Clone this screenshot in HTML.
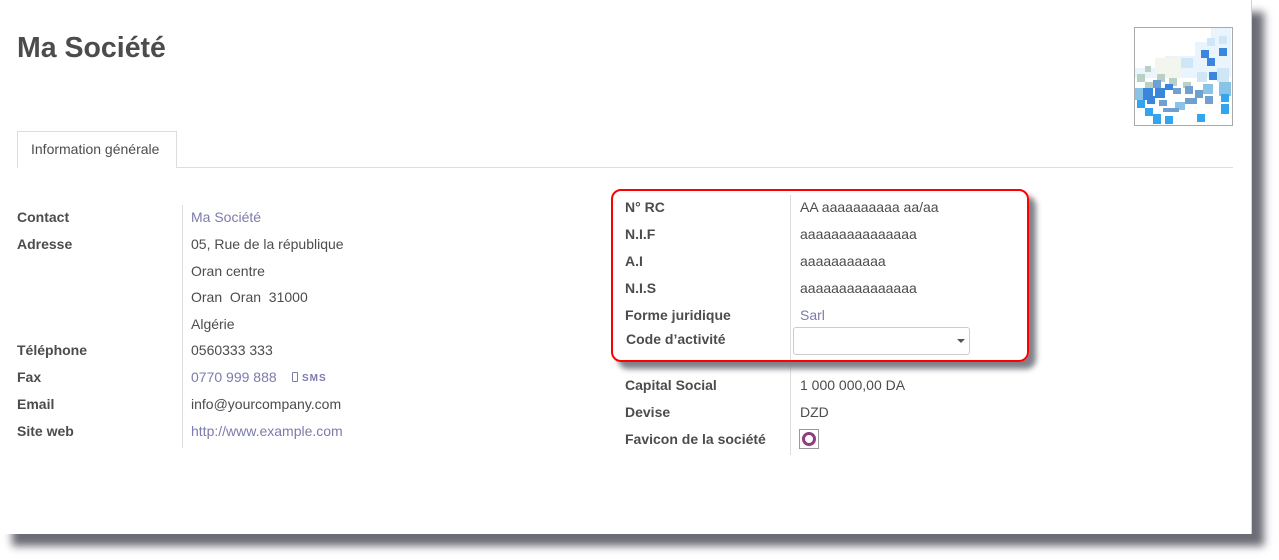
<!DOCTYPE html>
<html><head><meta charset="utf-8"><style>
html,body{margin:0;padding:0;background:#fff;width:1279px;height:560px;overflow:hidden;font-family:"Liberation Sans",Arial,sans-serif;font-size:14px;color:#4c4c4c}
#page{position:absolute;left:0;top:0;width:1251px;height:534px;background:#fff;box-shadow:12px 12px 8px #6c6c76;border-right:1px solid #d0d0d0}
.t{position:absolute;line-height:18px;white-space:nowrap}
.b{font-weight:bold;color:#4c4c4c}
.l{color:#7c7bad}
.v{position:absolute;width:1px;background:#ddd}
</style></head><body>
<div id="page">
<div class="t b" style="left:17px;top:31px;font-size:28.5px;line-height:34px">Ma Société</div>
<div style="position:absolute;left:1134px;top:27px;width:97px;height:97px;border:1px solid #aaa;overflow:hidden;background:#fff">
<svg width="97" height="97" viewBox="0 0 97 97">
<g fill="#eaf4fd"><rect x="76" y="0" width="20" height="14"/><rect x="60" y="14" width="36" height="14"/><rect x="30" y="28" width="66" height="14"/><rect x="0" y="40" width="96" height="10"/></g>
<g fill="#f2f6ee"><rect x="20" y="30" width="26" height="20"/></g>
<g fill="#cfe6f6"><rect x="72" y="10" width="8" height="8"/><rect x="84" y="8" width="8" height="8"/><rect x="46" y="30" width="12" height="10"/><rect x="82" y="40" width="12" height="14"/><rect x="62" y="44" width="10" height="10"/></g>
<g fill="#b9d0c4"><rect x="2" y="46" width="8" height="8"/><rect x="10" y="38" width="6" height="6"/><rect x="22" y="46" width="8" height="8"/><rect x="34" y="50" width="8" height="8"/><rect x="48" y="54" width="8" height="6"/><rect x="10" y="54" width="8" height="8"/></g>
<g fill="#89c3e6"><rect x="0" y="60" width="10" height="12"/><rect x="84" y="54" width="12" height="14"/><rect x="68" y="56" width="10" height="10"/><rect x="40" y="74" width="10" height="8"/></g>
<g fill="#3a86dc"><rect x="66" y="22" width="8" height="8"/><rect x="72" y="30" width="8" height="8"/><rect x="84" y="20" width="8" height="8"/><rect x="74" y="44" width="8" height="8"/><rect x="8" y="60" width="10" height="12"/><rect x="20" y="60" width="10" height="10"/><rect x="30" y="56" width="8" height="6"/><rect x="12" y="68" width="8" height="8"/></g>
<g fill="#6fa0d0"><rect x="18" y="52" width="8" height="8"/><rect x="38" y="60" width="8" height="6"/><rect x="50" y="58" width="8" height="8"/><rect x="60" y="62" width="8" height="8"/><rect x="24" y="72" width="8" height="6"/><rect x="28" y="80" width="16" height="4"/><rect x="50" y="70" width="12" height="6"/><rect x="70" y="68" width="8" height="8"/></g>
<g fill="#33a4f0"><rect x="2" y="72" width="8" height="8"/><rect x="10" y="80" width="8" height="8"/><rect x="18" y="86" width="8" height="10"/><rect x="30" y="88" width="8" height="8"/><rect x="62" y="86" width="8" height="8"/><rect x="86" y="66" width="8" height="8"/><rect x="86" y="76" width="8" height="10"/></g>
</svg></div>
<div style="position:absolute;left:17px;top:131px;width:158px;height:36px;border:1px solid #ddd;border-bottom:none;background:#fff;z-index:2"></div>
<div class="t" style="left:31px;top:140px;z-index:3">Information générale</div>
<div style="position:absolute;left:17px;top:167px;width:1216px;height:1px;background:#ddd"></div>

<div class="v" style="left:182px;top:205px;height:243px"></div>
<div class="t b" style="left:17px;top:208px">Contact</div><div class="t l" style="left:191px;top:208px">Ma Société</div>
<div class="t b" style="left:17px;top:235px">Adresse</div><div class="t" style="left:191px;top:235px">05, Rue de la république</div>
<div class="t" style="left:191px;top:262px">Oran centre</div>
<div class="t" style="left:191px;top:288px">Oran&nbsp; Oran&nbsp; 31000</div>
<div class="t" style="left:191px;top:315px">Algérie</div>
<div class="t b" style="left:17px;top:341px">Téléphone</div><div class="t" style="left:191px;top:341px">0560333 333</div>
<div class="t b" style="left:17px;top:368px">Fax</div><div class="t l" style="left:191px;top:368px">0770 999 888</div>
<div style="position:absolute;left:292px;top:372px;width:4px;height:8px;border:1px solid #7c7bad;border-radius:1px"></div>
<div class="t l" style="left:302px;top:371px;font-size:10px;line-height:16px;font-weight:bold;letter-spacing:1px">SMS</div>
<div class="t b" style="left:17px;top:395px">Email</div><div class="t" style="left:191px;top:395px">info@yourcompany.com</div>
<div class="t b" style="left:17px;top:422px">Site web</div><div class="t l" style="left:191px;top:422px">http://www.example.com</div>

<div class="v" style="left:790px;top:195px;height:260px"></div>
<div style="position:absolute;left:611px;top:189px;width:414px;height:169px;border:2px solid #f00;border-radius:10px;box-shadow:7px 7px 6px #80808a;background:transparent;z-index:1"></div>
<div class="t b" style="left:625px;top:198px">N° RC</div><div class="t" style="left:800px;top:198px">AA aaaaaaaaaa aa/aa</div>
<div class="t b" style="left:625px;top:225px">N.I.F</div><div class="t" style="left:800px;top:225px">aaaaaaaaaaaaaaa</div>
<div class="t b" style="left:625px;top:252px">A.I</div><div class="t" style="left:800px;top:252px">aaaaaaaaaaa</div>
<div class="t b" style="left:625px;top:279px">N.I.S</div><div class="t" style="left:800px;top:279px">aaaaaaaaaaaaaaa</div>
<div class="t b" style="left:625px;top:306px">Forme juridique</div><div class="t l" style="left:800px;top:306px">Sarl</div>
<div class="t b" style="left:626px;top:330px">Code d’activité</div>
<div style="position:absolute;left:793px;top:327px;width:175px;height:26px;border:1px solid #ccc;border-radius:3px;background:#fff;z-index:2"></div>
<div style="position:absolute;left:957px;top:339px;width:0;height:0;border-left:4px solid transparent;border-right:4px solid transparent;border-top:4px solid #555;z-index:3"></div>
<div class="t b" style="left:625px;top:376px">Capital Social</div><div class="t" style="left:800px;top:376px">1 000 000,00 DA</div>
<div class="t b" style="left:625px;top:403px">Devise</div><div class="t" style="left:800px;top:403px">DZD</div>
<div class="t b" style="left:625px;top:430px">Favicon de la société</div>
<div style="position:absolute;left:799px;top:429px;width:18px;height:18px;border:1px solid #999;background:#fff"></div>
<div style="position:absolute;left:802px;top:432px;border:3px solid #8c3f7c;border-radius:50%;width:8px;height:8px"></div>
</div>
</body></html>
